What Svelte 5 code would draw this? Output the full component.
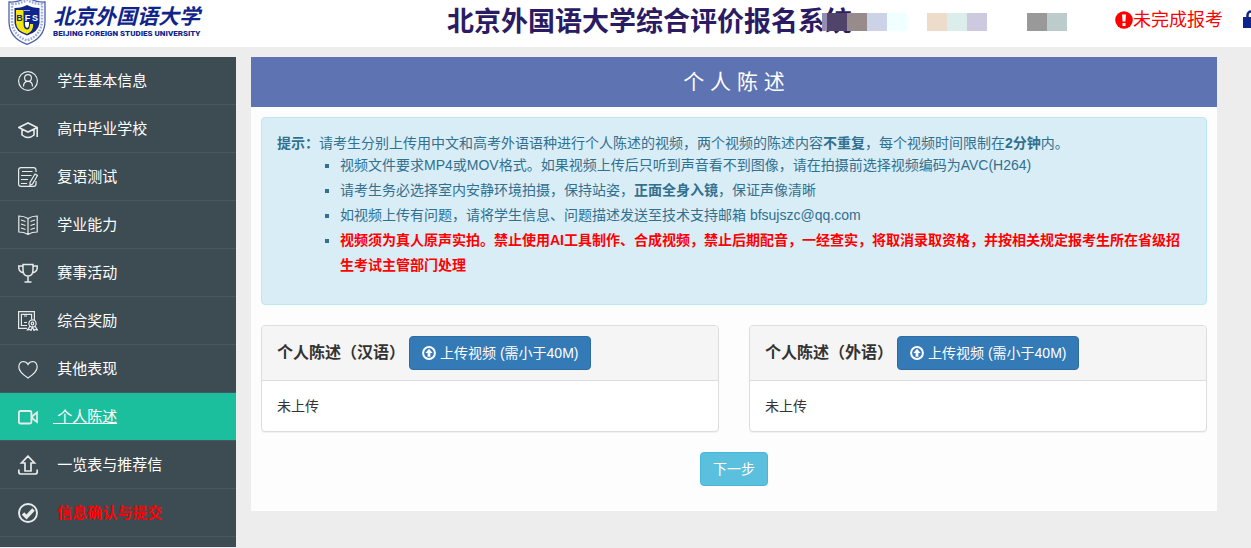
<script lang="ts">
  type MenuItem = { label: string; icon: string; warn?: boolean };

  const menu: MenuItem[] = [
    { label: '学生基本信息', icon: 'user' },
    { label: '高中毕业学校', icon: 'school' },
    { label: '复语测试', icon: 'test' },
    { label: '学业能力', icon: 'book' },
    { label: '赛事活动', icon: 'cup' },
    { label: '综合奖励', icon: 'award' },
    { label: '其他表现', icon: 'heart' },
    { label: '个人陈述', icon: 'video' },
    { label: '一览表与推荐信', icon: 'upload' },
    { label: '信息确认与提交', icon: 'confirm', warn: true },
  ];

  const videos = ['汉语', '外语'];

  // masked account info, one colour per tile
  const tiles = [
    '#51446b', '#978b8b', '#ccd3e7', '#f0ffff', 'transparent', '#eedccb', '#dceeec',
    '#cdcadf', 'transparent', 'transparent', '#999999', '#bccccc',
  ];

  let active = $state('video');
</script>

<header class="top">
  <a class="logo" href="#home">
    <svg class="crest" viewBox="0 0 38 45" aria-hidden="true">
      <path d="M1 2Q10 3 19-3Q28 3 37 2V21Q37 38 19 44.300Q1 38 1 21Z" fill="#fff" stroke="#4a60ae" stroke-width="1.300" />
      <path d="M4 4Q12 4 19 0Q26 4 34 4V21Q33.500 35 19 40.500Q4.500 35 4 21Z" fill="none" stroke="#a3add6" stroke-width="2.500" stroke-dasharray="1.800 1.200" />
      <path d="M6.500 8Q14 8 19 5Q24 8 31.500 8V23Q30.500 32 19 35.500Q7.500 32 6.500 23Z" fill="#10258c" />
      <path d="M8 10H15.500V23Q15.500 29.500 19 29.500Q22 29.500 22 24H25Q26 31 19 34Q8.500 31 8 23Z" fill="#f2e60a" />
      <path d="M16 10.500H22" stroke="#a3add6" stroke-width="1" />
      <path d="M17 22H21V25Q20.500 28 19 28T17 25Z" fill="#fff" />
      <g font-family="Liberation Sans, sans-serif" font-size="9" font-weight="700" text-anchor="middle">
        <text x="11.500" y="20.500" fill="#10258c">B</text>
        <text x="19.500" y="20.500" fill="#fff">F</text>
        <text x="27" y="20.500" fill="#fff">S</text>
      </g>
    </svg>
    <span class="logo-text">
      <span class="logo-cn">北京外国语大学</span>
      <span class="logo-en">BEIJING FOREIGN STUDIES UNIVERSITY</span>
    </span>
  </a>
  <h1>北京外国语大学综合评价报名系统</h1>
  <div class="account">
    {#each tiles as color}
      <span class="tile" style="background: {color}"></span>
    {/each}
  </div>
  <div class="status">
    <svg viewBox="0 0 18 18" width="18" height="18" aria-hidden="true">
      <circle cx="9" cy="9" r="8.800" fill="#f00" />
      <path d="M7 3.500H11L10.400 10.500H7.600Z" fill="#fff" />
      <path d="M7.500 12H10.500V15H7.500Z" fill="#fff" />
    </svg>
    <span>未完成报考</span>
  </div>
  <button class="lock" aria-label="修改密码">
    <svg viewBox="0 0 16 18" width="16" height="18" aria-hidden="true">
      <path d="M4.500 8V5A3.500 3.500 0 0 1 11.500 5V8" fill="none" stroke="#10258c" stroke-width="2.500" />
      <path d="M0 7H16V18H0Z" fill="#10258c" />
    </svg>
  </button>
</header>

<div class="layout">
  <nav>
    {#each menu as item}
      <a
        href="#{item.icon}"
        class="menu-item"
        class:active={active === item.icon}
        class:warn={item.warn}
        onclick={() => (active = item.icon)}
      >
        <svg class="menu-icon" viewBox="0 0 20 20" aria-hidden="true">
          {#if item.icon === 'user'}
            <circle cx="10" cy="10" r="9.400" />
            <circle cx="10" cy="7" r="3.400" />
            <path d="M5.500 15.500Q5.500 10.400 10 10.400T14.500 15.500" />
          {:else if item.icon === 'school'}
            <path d="M.8 8.500L10 4L19.200 8.500L10 13Z M4 10.500V16Q10 21 16 16V10.500 M19.200 8.500V18" stroke-width="1.600" />
          {:else if item.icon === 'test'}
            <path d="M18 5V3Q18 .6 15.500 .6H3Q.6 .6 .6 3V17Q.6 19.400 3 19.400H15.500Q18 19.400 18 17V14" />
            <path d="M4 4.500H14.500M3 8.500H13.500M3 12.500H10M3 16.500H9" />
            <path d="M17 7L19.500 8.500L14.500 17L12 18.500V15.500Z" />
          {:else if item.icon === 'book'}
            <path d="M10 3.500Q6 1 .8 1V17Q6 17 10 19.400Q14 17 19.200 17V1Q14 1 10 3.500V19" />
            <path d="M3 5L7.500 6.500M3 9L7.500 10.500M3 13L7.500 14.500M17 5L12.500 6.500M17 9L12.500 10.500M17 13L12.500 14.500" />
          {:else if item.icon === 'cup'}
            <path d="M5 1.500H15V7Q15 13 10 13T5 7Z M5 3H.8V5Q1 9 6 10M15 3H19.200V5Q19 9 14 10M10 13V18.500M6.500 19H13.500" stroke-width="1.500" />
          {:else if item.icon === 'award'}
            <path d="M9 17.400H.6V.6H16.400V9" />
            <path d="M9 14.500H3.400V3.400H13.600V8.500M6 5H9M6 11.500H9" />
            <circle cx="14.500" cy="12.500" r="3.600" />
            <circle cx="14.500" cy="12.500" r="1.300" />
            <path d="M12 15L9.500 19L12 18.500L13 19.500L14.500 16L16 19.500L17 18.500L19.500 19L17 15" />
          {:else if item.icon === 'heart'}
            <path d="M10 19Q.8 13 .8 8Q1 3 5 2.500Q8.500 2.500 10 5.500Q11.500 2.500 15 2.500Q19 3 19.200 8Q19.200 13 10 19Z" />
          {:else if item.icon === 'video'}
            <rect x=".9" y="4" width="12.500" height="12.500" rx="1.500" stroke-width="1.800" />
            <path d="M19 5.500V15L14.500 11.500V9Z" stroke-width="1.700" />
          {:else if item.icon === 'upload'}
            <path d="M10 1.200L3.500 8H7V16H13V8H16.500Z M.8 14.500V17Q.8 19 3 19H17Q19.200 19 19.200 17V14.500" stroke-width="1.700" />
          {:else}
            <circle cx="10" cy="10" r="9" stroke-width="1.900" />
            <path d="M5 10.500L8.500 14L15.500 6.500" stroke-width="3.400" />
          {/if}
        </svg>
        <span>&nbsp;{item.label}</span>
      </a>
    {/each}
  </nav>

  <main>
    <h2>个 人 陈 述</h2>
    <div class="content">
      <div class="alert">
        <strong>提示：</strong>请考生分别上传用中文和高考外语语种进行个人陈述的视频，两个视频的陈述内容<strong>不重复</strong>，每个视频时间限制在<strong>2分钟</strong>内。
        <ul>
          <li>视频文件要求MP4或MOV格式。如果视频上传后只听到声音看不到图像，请在拍摄前选择视频编码为AVC(H264)</li>
          <li>请考生务必选择室内安静环境拍摄，保持站姿，<strong>正面全身入镜</strong>，保证声像清晰</li>
          <li>如视频上传有问题，请将学生信息、问题描述发送至技术支持邮箱 bfsujszc@qq.com</li>
          <li><strong class="danger">视频须为真人原声实拍。禁止使用AI工具制作、合成视频，禁止后期配音，一经查实，将取消录取资格，并按相关规定报考生所在省级招生考试主管部门处理</strong></li>
        </ul>
      </div>

      <div class="panels">
        {#each videos as lang}
          <section class="panel">
            <div class="panel-heading">
              <h3>个人陈述（{lang}）</h3>
              <button class="btn btn-primary">
                <svg viewBox="0 0 14 14" width="14" height="14" aria-hidden="true">
                  <circle cx="7" cy="7" r="5.900" fill="none" stroke="#fff" stroke-width="2" />
                  <path d="M7 2.800L10.600 7H8.400V10.800H5.600V7H3.400Z" fill="#fff" />
                </svg>
                上传视频 (需小于40M)
              </button>
            </div>
            <div class="panel-body">未上传</div>
          </section>
        {/each}
      </div>

      <div class="actions">
        <button class="btn btn-info">下一步</button>
      </div>
    </div>
  </main>
</div>

<style>
  :global(body) {
    background: #ededed;
    color: #333;
    font-family: 'Liberation Sans', 'Noto Sans CJK SC', sans-serif;
    font-size: 14px;
    line-height: 20px;
    overflow-x: hidden;
  }

  .top {
    display: flex;
    align-items: center;
    box-sizing: border-box;
    height: 47px;
    margin-bottom: 10px;
    padding-bottom: 3px;
    background: #fff;
    overflow: hidden;
  }

  .logo {
    display: flex;
    flex: 0 0 439px;
    align-items: center;
    gap: 7px;
    margin-left: 8px;
    color: #10258c;
    text-decoration: none;
  }

  .crest {
    width: 38px;
    height: 45px;
  }

  .logo-text {
    display: flex;
    flex-direction: column;
  }

  .logo-cn {
    font-size: 21px;
    font-style: italic;
    font-weight: 700;
    line-height: 24px;
  }

  .logo-en {
    font-family: Roboto, 'Liberation Sans', sans-serif;
    font-size: 8px;
    font-weight: 900;
    line-height: 10px;
  }

  h1 {
    margin: 0;
    color: #2b1b62;
    font-size: 27px;
    line-height: 40px;
    white-space: nowrap;
  }

  .account {
    display: flex;
    z-index: 1;
    margin-left: -30px;
    border-left: 5px solid #948fb2;
  }

  .tile {
    width: 20px;
    height: 18px;
  }

  .status {
    display: flex;
    align-items: center;
    margin-left: auto;
    padding-bottom: 4px;
    color: #f00;
    font-size: 18px;
    white-space: nowrap;
  }

  .lock {
    display: flex;
    flex: none;
    margin: 0 -8px 0 20px;
    padding: 0 0 6px;
    border: none;
    background: none;
    cursor: pointer;
  }

  .layout {
    display: flex;
    align-items: flex-start;
    gap: 15px;
    padding-right: 34px;
  }

  nav {
    flex: 0 0 236px;
    min-height: calc(100vh - 58px);
    background: #3d4b52;
  }

  .menu-item {
    display: flex;
    align-items: center;
    gap: 15px;
    box-sizing: border-box;
    height: 48px;
    padding-left: 18px;
    border-bottom: 1px solid #48575f;
    color: #fff;
    font-size: 15px;
    text-decoration: none;
  }

  .menu-item.active {
    background: #1cbf9d;
    text-decoration: underline;
  }

  .menu-item.warn {
    color: #f00;
    font-weight: 700;
  }

  .menu-icon {
    width: 20px;
    height: 20px;
    fill: none;
    stroke: #e8ebec;
    stroke-width: 1.2;
  }

  main {
    flex: 1;
    min-width: 0;
    background: #fdfdfd;
  }

  h2 {
    margin: 0;
    background: #5e73b1;
    color: #fff;
    font-size: 21px;
    font-weight: 400;
    line-height: 50px;
    text-align: center;
  }

  .content {
    padding: 10px 10px 25px;
  }

  .alert {
    margin-bottom: 20px;
    padding: 15px 15px 16px;
    border: 1px solid #bce8f1;
    border-radius: 4px;
    background: #d9edf7;
    color: #31708f;
  }

  ul {
    margin: 0 0 10px;
    padding: 0 0 0 63px;
    list-style: square;
    line-height: 25px;
  }

  .danger {
    color: #f00;
  }

  .panels {
    display: flex;
    gap: 30px;
    margin-bottom: 20px;
  }

  .panel {
    flex: 1;
    border: 1px solid #ddd;
    border-radius: 4px;
    background: #fff;
    box-shadow: 0 1px 1px rgba(0, 0, 0, 0.05);
  }

  .panel-heading {
    display: flex;
    align-items: center;
    gap: 4px;
    padding: 10px 15px;
    border-bottom: 1px solid #ddd;
    border-radius: 3px 3px 0 0;
    background: #f5f5f5;
  }

  h3 {
    margin: 0;
    font-size: 16px;
  }

  .panel-body {
    padding: 15px;
  }

  .btn {
    display: inline-flex;
    align-items: center;
    gap: 4px;
    padding: 6px 12px;
    border: 1px solid;
    border-radius: 4px;
    color: #fff;
    font: inherit;
    cursor: pointer;
  }

  .btn-primary {
    border-color: #2e6da4;
    background: #337ab7;
  }

  .btn-info {
    border-color: #46b8da;
    background: #5bc0de;
  }

  .actions {
    display: flex;
    justify-content: center;
  }
</style>
